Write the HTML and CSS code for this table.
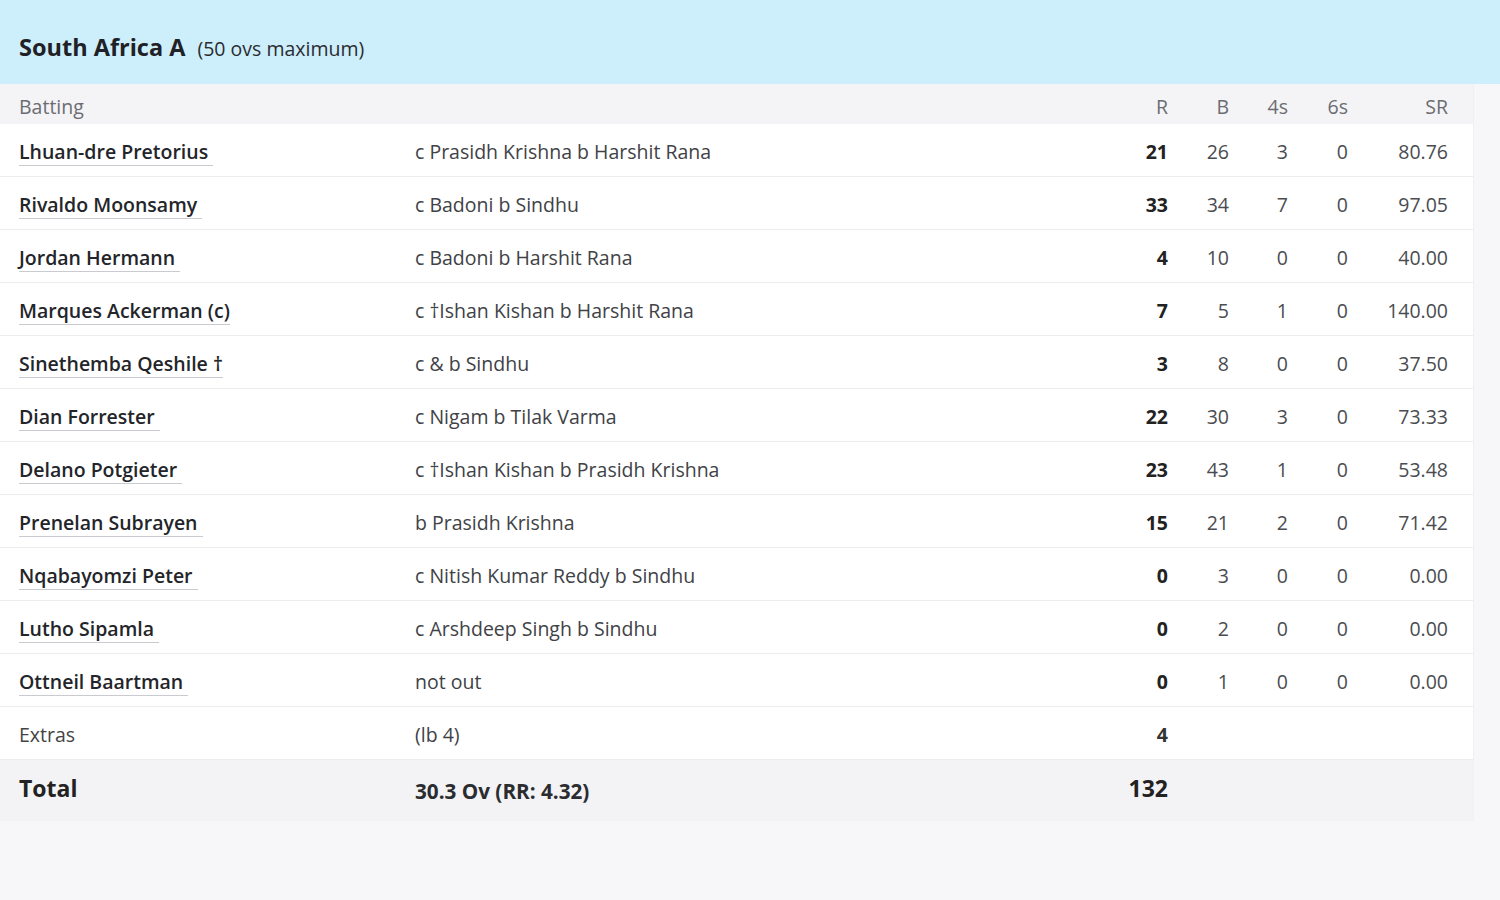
FILE: index.html
```html
<!DOCTYPE html>
<html lang="en">
<head>
<meta charset="utf-8">
<title>South Africa A scorecard</title>
<link rel="stylesheet" href="styles.css">
</head>
<body>
<div class="page">
  <header class="team-bar">
    <h1 class="team-name">South Africa A</h1>
    <span class="team-sub">(50 ovs maximum)</span>
  </header>
  <div class="card">
    <div class="row head">
      <div class="c-name">Batting</div>
      <div class="c-dis"></div>
      <div class="c-num">R</div>
      <div class="c-num">B</div>
      <div class="c-num">4s</div>
      <div class="c-num">6s</div>
      <div class="c-num">SR</div>
    </div>
    <div class="row">
      <div class="c-name"><a class="player">Lhuan-dre Pretorius&nbsp;</a></div>
      <div class="c-dis">c Prasidh Krishna b Harshit Rana</div>
      <div class="c-num runs">21</div><div class="c-num">26</div><div class="c-num">3</div><div class="c-num">0</div><div class="c-num">80.76</div>
    </div>
    <div class="row">
      <div class="c-name"><a class="player">Rivaldo Moonsamy&nbsp;</a></div>
      <div class="c-dis">c Badoni b Sindhu</div>
      <div class="c-num runs">33</div><div class="c-num">34</div><div class="c-num">7</div><div class="c-num">0</div><div class="c-num">97.05</div>
    </div>
    <div class="row">
      <div class="c-name"><a class="player">Jordan Hermann&nbsp;</a></div>
      <div class="c-dis">c Badoni b Harshit Rana</div>
      <div class="c-num runs">4</div><div class="c-num">10</div><div class="c-num">0</div><div class="c-num">0</div><div class="c-num">40.00</div>
    </div>
    <div class="row">
      <div class="c-name"><a class="player">Marques Ackerman (c)</a></div>
      <div class="c-dis">c †Ishan Kishan b Harshit Rana</div>
      <div class="c-num runs">7</div><div class="c-num">5</div><div class="c-num">1</div><div class="c-num">0</div><div class="c-num">140.00</div>
    </div>
    <div class="row">
      <div class="c-name"><a class="player">Sinethemba Qeshile †</a></div>
      <div class="c-dis">c &amp; b Sindhu</div>
      <div class="c-num runs">3</div><div class="c-num">8</div><div class="c-num">0</div><div class="c-num">0</div><div class="c-num">37.50</div>
    </div>
    <div class="row">
      <div class="c-name"><a class="player">Dian Forrester&nbsp;</a></div>
      <div class="c-dis">c Nigam b Tilak Varma</div>
      <div class="c-num runs">22</div><div class="c-num">30</div><div class="c-num">3</div><div class="c-num">0</div><div class="c-num">73.33</div>
    </div>
    <div class="row">
      <div class="c-name"><a class="player">Delano Potgieter&nbsp;</a></div>
      <div class="c-dis">c †Ishan Kishan b Prasidh Krishna</div>
      <div class="c-num runs">23</div><div class="c-num">43</div><div class="c-num">1</div><div class="c-num">0</div><div class="c-num">53.48</div>
    </div>
    <div class="row">
      <div class="c-name"><a class="player">Prenelan Subrayen&nbsp;</a></div>
      <div class="c-dis">b Prasidh Krishna</div>
      <div class="c-num runs">15</div><div class="c-num">21</div><div class="c-num">2</div><div class="c-num">0</div><div class="c-num">71.42</div>
    </div>
    <div class="row">
      <div class="c-name"><a class="player">Nqabayomzi Peter&nbsp;</a></div>
      <div class="c-dis">c Nitish Kumar Reddy b Sindhu</div>
      <div class="c-num runs">0</div><div class="c-num">3</div><div class="c-num">0</div><div class="c-num">0</div><div class="c-num">0.00</div>
    </div>
    <div class="row">
      <div class="c-name"><a class="player">Lutho Sipamla&nbsp;</a></div>
      <div class="c-dis">c Arshdeep Singh b Sindhu</div>
      <div class="c-num runs">0</div><div class="c-num">2</div><div class="c-num">0</div><div class="c-num">0</div><div class="c-num">0.00</div>
    </div>
    <div class="row">
      <div class="c-name"><a class="player">Ottneil Baartman&nbsp;</a></div>
      <div class="c-dis">not out</div>
      <div class="c-num runs">0</div><div class="c-num">1</div><div class="c-num">0</div><div class="c-num">0</div><div class="c-num">0.00</div>
    </div>
    <div class="row extras">
      <div class="c-name">Extras</div>
      <div class="c-dis">(lb 4)</div>
      <div class="c-num runs">4</div><div class="c-num"></div><div class="c-num"></div><div class="c-num"></div><div class="c-num"></div>
    </div>
    <div class="row total">
      <div class="c-name">Total</div>
      <div class="c-dis">30.3 Ov (RR: 4.32)</div>
      <div class="c-num runs">132</div><div class="c-num"></div><div class="c-num"></div><div class="c-num"></div><div class="c-num"></div>
    </div>
  </div>
</div>
</body>
</html>
```

FILE: styles.css
```css
* { box-sizing: border-box; }
html, body {
  margin: 0;
  padding: 0;
  background: #f7f7f9;
  font-family: "Open Sans", "Noto Sans", sans-serif;
  color: #222;
}
.page {
  width: 1500px;
  min-height: 900px;
}
.team-bar {
  height: 84px;
  background: #cdeefb;
  display: flex;
  align-items: baseline;
  padding: 31px 0 0 19px;
  gap: 12px;
}
.team-name {
  margin: 0;
  font-size: 23.5px;
  font-weight: 700;
  color: #1f2126;
}
.team-sub {
  font-size: 19.5px;
  color: #2a2c30;
}
.card {
  width: 1474px;
  border-right: 1px solid #f0f0f2;
}
.row {
  display: grid;
  grid-template-columns: 396px 1fr 60px 61px 59px 60px 100px;
  align-items: center;
  height: 53px;
  padding: 3px 25px 0 19px;
  background: #fff;
  border-bottom: 1px solid #ececef;
  font-size: 19.5px;
}
.row.head {
  height: 40px;
  padding-top: 4px;
  background: #f4f4f6;
  color: #6b6d72;
  border-bottom: none;
}
.c-num {
  text-align: right;
  color: #4a4c50;
}
.head .c-num { color: #6b6d72; }
.c-dis { color: #404246; }
.c-num.runs {
  font-weight: 700;
  color: #222;
}
.player {
  color: #23252a;
  font-weight: 600;
  text-decoration: none;
  border-bottom: 1px solid #c9cbd0;
}
.extras .c-name { color: #444; }
.extras .c-num.runs { color: #333; }
.row.total {
  height: 61px;
  background: #f3f3f5;
  border-bottom: none;
  align-items: start;
  padding-top: 12px;
}
.total .c-name {
  font-size: 23px;
  font-weight: 700;
  color: #222;
}
.total .c-dis {
  font-size: 20.7px;
  font-weight: 700;
  color: #2a2c30;
  padding-top: 5px;
}
.total .c-num.runs {
  font-size: 23px;
}
```
